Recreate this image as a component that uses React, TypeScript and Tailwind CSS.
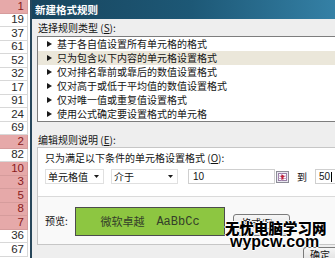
const sheetRows = [
  { value: "1", hit: true },
  { value: "19" },
  { value: "37" },
  { value: "61" },
  { value: "52" },
  { value: "32" },
  { value: "17" },
  { value: "91" },
  { value: "24" },
  { value: "69" },
  { value: "2", hit: true },
  { value: "82" },
  { value: "10", hit: true },
  { value: "3", hit: true },
  { value: "5", hit: true },
  { value: "8", hit: true },
  { value: "7", hit: true },
  { value: "36" },
  { value: "67" },
];

const ruleTypes = [
  "基于各自值设置所有单元格的格式",
  "只为包含以下内容的单元格设置格式",
  "仅对排名靠前或靠后的数值设置格式",
  "仅对高于或低于平均值的数值设置格式",
  "仅对唯一值或重复值设置格式",
  "使用公式确定要设置格式的单元格",
];

function Triangle() {
  return (
    <svg width="5" height="6" viewBox="0 0 5 6" className="shrink-0">
      <path d="M0 0L5 3L0 6Z" fill="#1a1a1a" />
    </svg>
  );
}

function DropArrow() {
  return (
    <svg width="5" height="3" viewBox="0 0 5 3" className="shrink-0">
      <path d="M0 0H5L2.5 3Z" fill="#1a1a1a" />
    </svg>
  );
}

function CollapseIcon() {
  return (
    <svg width="13" height="12" viewBox="0 0 13 12" className="shrink-0">
      <rect x="0.5" y="0.5" width="12" height="11" fill="#e9e8f0" stroke="#8c8c96" />
      <rect x="2.5" y="2.5" width="8" height="7" fill="#fff" stroke="#9a7fa8" />
      <path d="M2.5 5H10.5M2.5 7.5H10.5M5.5 2.5V9.5" stroke="#c9a6c9" />
      <path d="M6.5 3.5L9 6H7.5V8.5H5.5V6H4Z" fill="#c0243a" />
    </svg>
  );
}

function SheetColumn() {
  return (
    <div className="flex w-[28px] shrink-0 flex-col">
      {sheetRows.map((row, index) => (
        <div
          key={index}
          className={`flex h-[13.5px] shrink-0 items-center justify-end border-r border-b pr-[3px] font-['Liberation_Sans',sans-serif] text-[11.5px] leading-none ${
            row.hit ? "border-[#d69c9c] bg-[#e6a9a9] text-[#8a1b1b]" : "border-[#d8d8d8] bg-white text-[#2a2a2a]"
          }`}
        >
          {row.value}
        </div>
      ))}
    </div>
  );
}

function Dialog() {
  return (
    <div className="flex w-[320px] shrink-0 flex-col border-l-2 border-[#27465a] bg-[#eeeeee]">
      <div className="flex h-[19px] shrink-0 items-center bg-linear-to-r from-[#18455e] via-[#1d5876] to-[#3785ab] pl-[3px] text-[10.5px] font-bold text-white">
        新建格式规则
      </div>
      <div className="flex flex-col pt-[3px] pl-[5px]">
        <div className="h-[12px] pl-[1px] leading-[12px]">
          选择规则类型 (<span className="underline">S</span>):
        </div>
        <div className="mt-[2px] border border-[#7d7d7d] bg-white">
          {ruleTypes.map((label, index) => (
            <div key={label} className={`flex h-[14px] items-center pl-[9px] ${index === 1 ? "bg-[#ebe7da]" : ""}`}>
              <Triangle />
              <span className="ml-[5px] whitespace-nowrap leading-none">{label}</span>
            </div>
          ))}
        </div>
        <div className="mt-[12px] h-[12px] pl-[1px] leading-[12px]">
          编辑规则说明 (<span className="underline">E</span>):
        </div>
        <div className="mt-px border border-[#c6c6c6] bg-[#f9f9f9]">
          <div className="border-b border-[#dadada] bg-white pt-[4px] pb-[12px] pl-[7px]">
            <div className="h-[12px] whitespace-nowrap leading-[12px]">
              只为满足以下条件的单元格设置格式 (<span className="underline">O</span>):
            </div>
            <div className="mt-[5px] flex h-[15px] items-center">
              <div className="flex h-full w-[59px] items-center justify-between border border-[#e0e0e0] bg-white pr-[4px] pl-[2px]">
                <span className="leading-none">单元格值</span>
                <DropArrow />
              </div>
              <div className="ml-[7px] flex h-full w-[67px] items-center justify-between border border-[#e0e0e0] bg-white pr-[4px] pl-[2px]">
                <span className="leading-none">介于</span>
                <DropArrow />
              </div>
              <div className="ml-[10px] flex h-full w-[87px] items-center border border-[#cfcfcf] bg-white pl-[4px] font-['Liberation_Sans',sans-serif] text-[10px] leading-none">
                10
              </div>
              <div className="ml-px">
                <CollapseIcon />
              </div>
              <span className="ml-[8px] leading-none">到</span>
              <div className="ml-[8px] flex h-full w-[30px] items-center border border-[#cfcfcf] bg-white pl-[3px] font-['Liberation_Sans',sans-serif] text-[10px] leading-none">
                50<span className="ml-px h-[10px] w-px bg-black" />
              </div>
            </div>
          </div>
          <div className="flex items-start pt-[10px] pb-[8px] pl-[7px]">
            <span className="mt-[9px] w-[30px] leading-none">预览:</span>
            <div className="flex h-[29px] w-[150px] items-center justify-center border border-[#4c4c4c] bg-[#8dc641] text-[#34402a]">
              <span className="text-[11px] leading-none">微软卓越</span>
              <span className="ml-[12px] font-['Liberation_Mono',monospace] text-[12px] leading-none">AaBbCc</span>
            </div>
            <div className="mt-[7px] ml-[8px] flex h-[22px] w-[57px] items-start justify-center rounded-[3px] border border-[#7a7a7a] bg-linear-to-b from-[#f6f6f6] to-[#dedede] pt-[3px] leading-none">
              格式(<span className="underline">F</span>)...
            </div>
          </div>
        </div>
        <div className="mt-[2px] ml-[266px] flex h-[16px] w-[40px] items-start rounded-[3px] border border-[#7a7a7a] bg-linear-to-b from-[#f6f6f6] to-[#dedede] pt-[2px] pl-[6px] leading-none">
          确定
        </div>
      </div>
    </div>
  );
}

function Watermark() {
  return (
    <div className="absolute top-[221px] left-[225px] leading-none text-black [text-shadow:1px_0_0_#fff,-1px_0_0_#fff,0_1px_0_#fff,0_-1px_0_#fff]">
      <div className="text-[14.5px] font-black whitespace-nowrap">无忧电脑学习网</div>
      <div className="mt-[-2px] ml-[5px] font-['Liberation_Sans',sans-serif] text-[16px] font-bold whitespace-nowrap">wypcw.com</div>
    </div>
  );
}

export default function App() {
  return (
    <div className="relative flex h-[258px] w-[335px] overflow-hidden bg-white font-['Noto_Sans_CJK_SC',sans-serif] text-[10px] text-[#141414]">
      <SheetColumn />
      <div className="w-[2px] shrink-0 bg-white" />
      <Dialog />
      <Watermark />
    </div>
  );
}
